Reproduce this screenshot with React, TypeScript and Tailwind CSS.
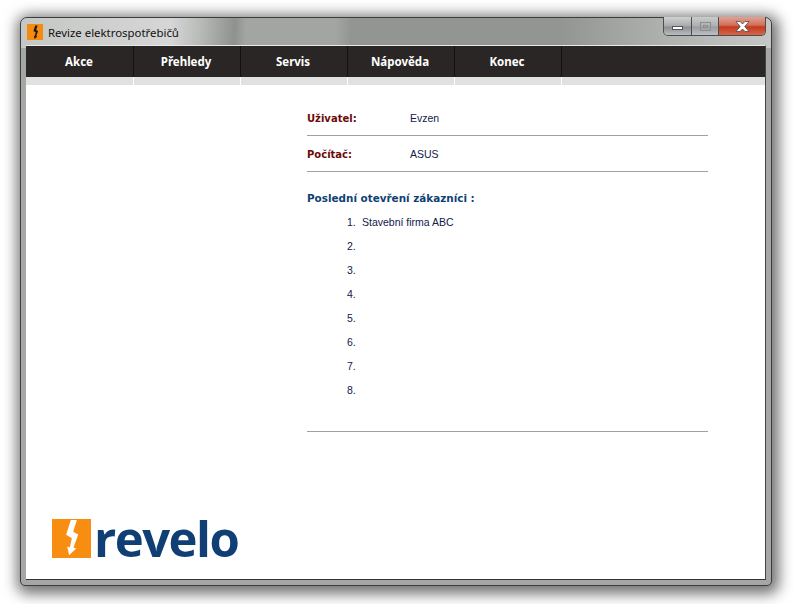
import React from 'react';

const menu = ['Akce', 'Přehledy', 'Servis', 'Nápověda', 'Konec'];
const recent = ['Stavební firma ABC', '', '', '', '', '', '', ''];

function Bolt({ className, color }: { className: string; color: string }) {
  return (
    <svg className={className} viewBox="14 14 116 116" fill={color}>
      <path d="M70 17 L88 17 L77 52 L92 60 L78 99 L86 102 L65 122 L59 96 L67 99 L73 71 L56 61 Z" />
    </svg>
  );
}

export default function App() {
  return (
    <div className="w-[794px] h-[604px] bg-white pl-[20px] pt-[17px] font-['Liberation_Sans',sans-serif] overflow-hidden">
      {/* Window frame */}
      <div className="relative w-[752px] h-[569px] flex flex-col rounded-t-[7px] rounded-b-[5px] border border-[#3c3e3d] bg-[#a5a7a5] shadow-[2px_3px_14px_5px_rgba(0,0,0,0.55)] px-[5px] pb-[5px]">
        <div className="absolute inset-x-0 top-0 h-[30px] rounded-t-[6px] bg-[linear-gradient(92deg,#c5c7c5_0%,#d5d6d5_20%,#b8bab8_24%,#8f918f_28.5%,#a3a5a2_30%,#a3a5a2_42%,#939592_44%,#939592_72%,#b0b2b0_86%,#c5c7c5_100%)]" />

        {/* Title bar */}
        <div className="relative h-[27px] flex items-center shrink-0">
          <div className="w-[16px] h-[16px] ml-[1px] mt-[1px] bg-[#f58a0b] flex items-center justify-center">
            <Bolt className="w-[15px] h-[15px]" color="#1a1a1a" />
          </div>
          <span className="ml-[5px] mt-[2px] text-[11.4px] text-[#111] font-['Noto_Sans',sans-serif]">Revize elektrospotřebičů</span>

          {/* Window buttons */}
          <div className="absolute top-[-1px] right-[0px] flex h-[19px] w-[103px] rounded-b-[5px] border border-t-0 border-[#4a4c4e] overflow-hidden">
            <div className="w-[28px] flex items-center justify-center border-r border-[#4a4c4e] bg-[linear-gradient(#cfd1d0,#a9abab_50%,#8c8e90_55%,#b9bcc2)]">
              <div className="w-[11px] h-[4px] mt-[3px] bg-white border border-[#555]" />
            </div>
            <div className="w-[27px] flex items-center justify-center border-r border-[#4a4c4e] bg-[linear-gradient(#c9cbca,#aeb0b0_50%,#9a9ca0_55%,#bcbfc6)]">
              <div className="w-[11px] h-[9px] border border-[#8b8d8e] flex items-center justify-center">
                <div className="w-[5px] h-[3px] border border-[#8b8d8e]" />
              </div>
            </div>
            <div className="flex-1 flex items-center justify-center bg-[linear-gradient(#e2a193,#d2705a_45%,#c33b1f_55%,#d8644a)]">
              <svg className="w-[15px] h-[11px]" viewBox="0 0 15 11" fill="#ffffff" stroke="#4a4c4e" strokeWidth="0.8">
                <path d="M1 0.5 H5 L7.5 3 L10 0.5 H14 L9.8 5.5 L14 10.5 H10 L7.5 8 L5 10.5 H1 L5.2 5.5 Z" />
              </svg>
            </div>
          </div>
        </div>

        {/* Client area */}
        <div className="relative flex-1 flex flex-col bg-white border-t border-t-[#e8e9e8] border-r border-r-[#444] border-b border-b-[#333]">
          <nav className="shrink-0">
            <ul className="flex bg-[#2a2625] h-[31px] pl-[1px]">
              {menu.map((item) => (
                <li key={item} className="w-[107px] flex items-center justify-center pr-[2px] border-r border-[#111] text-[11.5px] font-bold text-white font-['Noto_Sans',sans-serif]">
                  {item}
                </li>
              ))}
            </ul>
            <div className="flex h-[8px] bg-[#e0e2df] pl-[1px]">
              {menu.map((item) => (
                <div key={item} className="w-[107px] border-r border-white" />
              ))}
            </div>
          </nav>

          <div className="flex-1 flex">
            {/* Left column with logo */}
            <div className="w-[281px] flex items-end pl-[26px] pb-[21px]">
              <div className="flex items-center">
                <div className="w-[39px] h-[39px] bg-[#f78e12] flex items-center justify-center">
                  <Bolt className="w-[39px] h-[39px]" color="#ffffff" />
                </div>
                <span className="ml-[3px] text-[49px] leading-[39px] font-bold tracking-[-1.5px] text-[#0f3f74] font-['Open_Sans',sans-serif]">revelo</span>
              </div>
            </div>

            {/* Info column */}
            <div className="w-[401px] text-[10.5px] text-[#10204a]">
              <div className="h-[51px] pb-[8px] flex items-end border-b border-[#a0a0a0]">
                <div className="flex items-baseline">
                  <span className="w-[103px] font-bold text-[10px] text-[#6b0a0a] font-['DejaVu_Sans',sans-serif]">Uživatel:</span>
                  <span>Evzen</span>
                </div>
              </div>
              <div className="h-[36px] pb-[8px] flex items-end border-b border-[#a0a0a0]">
                <div className="flex items-baseline">
                  <span className="w-[103px] font-bold text-[10px] text-[#6b0a0a] font-['DejaVu_Sans',sans-serif]">Počítač:</span>
                  <span>ASUS</span>
                </div>
              </div>
              <h2 className="mt-[18px] font-bold text-[10.4px] leading-[16px] text-[#0f3f74] font-['DejaVu_Sans',sans-serif]">Poslední otevření zákazníci :</h2>
              <ol className="mt-[5px] pl-[40px] pb-[28px] border-b border-[#a0a0a0]">
                {recent.map((name, i) => (
                  <li key={i} className="h-[24px] flex items-center">
                    <span className="w-[15px]">{i + 1}.</span>
                    <span>{name}</span>
                  </li>
                ))}
              </ol>
            </div>
          </div>
        </div>
      </div>
    </div>
  );
}
